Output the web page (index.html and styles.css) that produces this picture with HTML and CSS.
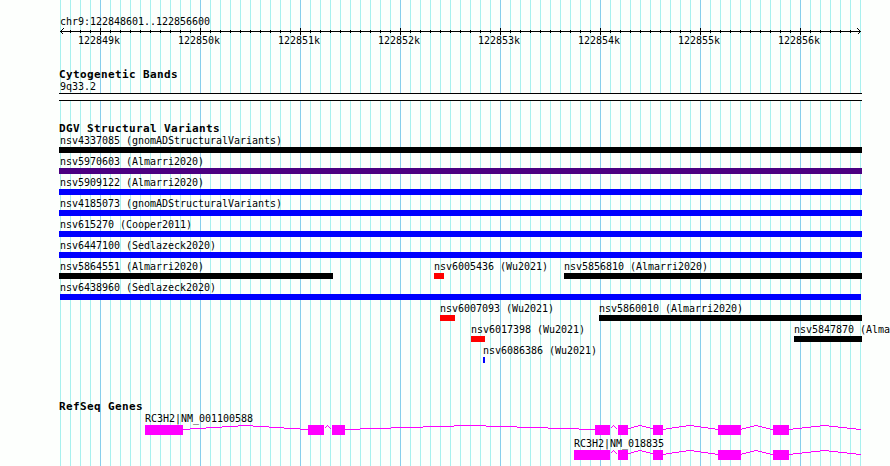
FILE: index.html
```
<!DOCTYPE html>
<html lang="en">
<head>
<meta charset="utf-8">
<title>chr9:122848601..122856600</title>
<link rel="stylesheet" href="styles.css">
</head>
<body>
<main class="browser">
  <header class="ruler">
    <div class="region">chr9:122848601..122856600</div>
    <svg class="axis" width="803" height="9" viewBox="0 0 803 9" shape-rendering="crispEdges">
      <defs>
        <pattern id="minor" x="1" width="10" height="9" patternUnits="userSpaceOnUse"><rect y="3" width="1" height="3"/></pattern>
        <pattern id="major" x="41" width="100" height="9" patternUnits="userSpaceOnUse"><rect y="1" width="1" height="7"/></pattern>
      </defs>
      <rect x="1" y="4" width="801" height="1"/>
      <rect x="10" width="786" height="9" fill="url(#minor)"/>
      <rect x="10" width="786" height="9" fill="url(#major)"/>
      <path class="arrow" d="M4.5 1.5L1.5 4.5L4.5 7.5M798.5 1.5L801.5 4.5L798.5 7.5"/>
    </svg>
    <div class="ticks"><span>122849k</span><span>122850k</span><span>122851k</span><span>122852k</span><span>122853k</span><span>122854k</span><span>122855k</span><span>122856k</span></div>
  </header>

  <section class="track cytoband">
    <h2>Cytogenetic Bands</h2>
    <div class="label">9q33.2</div>
    <div class="band"></div>
  </section>

  <section class="track variants">
    <h2>DGV Structural Variants</h2>
    <div class="lane"><div class="feature">nsv4337085 (gnomADStructuralVariants)<i class="bar black"></i></div></div>
    <div class="lane"><div class="feature">nsv5970603 (Almarri2020)<i class="bar purple"></i></div></div>
    <div class="lane"><div class="feature">nsv5909122 (Almarri2020)<i class="bar blue"></i></div></div>
    <div class="lane"><div class="feature">nsv4185073 (gnomADStructuralVariants)<i class="bar blue"></i></div></div>
    <div class="lane"><div class="feature">nsv615270 (Cooper2011)<i class="bar blue"></i></div></div>
    <div class="lane"><div class="feature">nsv6447100 (Sedlazeck2020)<i class="bar blue"></i></div></div>
    <div class="lane three">
      <div class="feature">nsv5864551 (Almarri2020)<i class="bar black" style="width:274px"></i></div>
      <div class="feature snug">nsv6005436 (Wu2021)<i class="bar red" style="width:10px"></i></div>
      <div class="feature snug">nsv5856810 (Almarri2020)<i class="bar black" style="width:298px"></i></div>
    </div>
    <div class="lane"><div class="feature inset">nsv6438960 (Sedlazeck2020)<i class="bar blue"></i></div></div>
    <div class="lane two">
      <div class="feature snug">nsv6007093 (Wu2021)<i class="bar red" style="width:15px"></i></div>
      <div class="feature snug">nsv5860010 (Almarri2020)<i class="bar black" style="width:263px"></i></div>
    </div>
    <div class="lane clipped">
      <div class="feature snug">nsv6017398 (Wu2021)<i class="bar red" style="width:14px"></i></div>
      <div class="feature snug">nsv5847870 (Alma<i class="bar black" style="width:68px"></i></div>
    </div>
    <div class="lane last"><div class="feature snug">nsv6086386 (Wu2021)<i class="bar blue" style="width:2px"></i></div></div>
  </section>

  <section class="track genes">
    <h2>RefSeq Genes</h2>
    <div class="gene long">
      <div class="label">RC3H2|NM_001100588</div>
      <svg width="716" height="10" viewBox="145 0 716 10" shape-rendering="crispEdges">
        <path class="intron" d="M183 4.5H190M190 3.5H206M206 2.5H222M222 1.5H238M238 .5H253M253 1.5H269M269 2.5H284M284 3.5H300M300 4.5H308M324.5 3.5L327.5 .5L331.5 4.5M345 4.5H360M360 3.5H391M391 2.5H423M423 1.5H454M454 .5H486M486 1.5H517M517 2.5H548M548 3.5H579M579 4.5H595"/>
        <path class="exon" d="M145 0h38v10h-38zM308 0h16v10h-16zM332 0h13v10h-13z"/>
        <g id="shared">
          <path class="intron" d="M610.5 3.5L613.5 .5L617.5 4.5M628 3.5H631M631 2.5H634M634 1.5H638M638 .5H642M642 1.5H646M646 2.5H650M650 3.5H653M663 4.5H666M666 3.5H672M672 2.5H679M679 1.5H686M686 .5H694M694 1.5H701M701 2.5H708M708 3.5H715M715 4.5H718M741 4.5H742M742 3.5H746M746 2.5H750M750 1.5H754M754 .5H758M758 1.5H762M762 2.5H766M766 3.5H770M770 4.5H773M789 4.5H793M793 3.5H802M802 2.5H811M811 1.5H820M820 .5H829M829 1.5H838M838 2.5H847M847 3.5H856M856 4.5H861"/>
          <path class="exon" d="M595 0h15v10h-15zM618 0h10v10h-10zM653 0h10v10h-10zM718 0h23v10h-23zM773 0h16v10h-16z"/>
        </g>
      </svg>
    </div>
    <div class="gene short">
      <div class="label">RC3H2|NM_018835</div>
      <svg width="287" height="10" viewBox="574 0 287 10" shape-rendering="crispEdges">
        <use href="#shared"/>
        <path class="exon" d="M574 0h36v10h-36z"/>
      </svg>
    </div>
  </section>
</main>
</body>
</html>
```
FILE: styles.css
```
* { box-sizing: border-box; }
body {
  margin: 0;
  background: #fdfffd;
  color: #000;
  font: 10px/12px "DejaVu Sans Mono", "Liberation Mono", monospace;
  letter-spacing: -0.02px;
}
.browser {
  width: 890px;
  height: 466px;
  padding: 15px 0 0 59px;
  overflow: hidden;
  background:
    repeating-linear-gradient(to right, #87ceeb 0 1px, transparent 1px 100px) 100px 0 / 761px 100% no-repeat,
    repeating-linear-gradient(to right, #a8f0ee 0 1px, transparent 1px 10px) 60px 0 / 801px 100% no-repeat;
}
svg { display: block; }
h2 {
  height: 12px;
  margin: 0;
  font: bold 11px/14px "DejaVu Sans Mono", "Liberation Mono", monospace;
  letter-spacing: 0.377px;
}
.region { height: 12px; padding-left: 1px; line-height: 14px; }
.arrow { fill: none; stroke: #000; }
.ticks {
  display: grid;
  grid-template-columns: repeat(8, 100px);
  height: 11px;
  margin-left: 19px;
  line-height: 9px;
}
.label { height: 12px; padding-left: 1px; line-height: 14px; }
.cytoband { padding-top: 21px; }
.band {
  width: 803px;
  height: 8px;
  margin-top: 1px;
  border: solid #000;
  border-width: 1px 0;
  background: #fdfffd;
}
.variants { padding-top: 21px; }
.lane { display: flex; width: 803px; height: 21px; white-space: nowrap; }
.feature { flex: 1; padding: 1px 0 0 1px; }
.snug { padding-left: 0; }
.bar { display: block; height: 6px; margin-left: -1px; }
.snug .bar { margin-left: 0; }
.inset .bar { margin: 0 1px 0 0; }
.black { background: #000; }
.purple { background: #4b0082; }
.blue { background: #00f; }
.red { background: #f00; }
.three { display: grid; grid-template-columns: 375px 130px 298px; }
.two { display: grid; grid-template-columns: 159px 263px; padding-left: 381px; }
.clipped { display: grid; grid-template-columns: 323px 68px; padding-left: 412px; }
.last { padding-left: 424px; }
.genes { padding-top: 35px; }
.gene { height: 25px; }
.gene .label { height: 13px; padding: 0; }
.gene:last-child { height: 23px; }
.long { padding-left: 86px; }
.short { padding-left: 515px; }
.intron { fill: none; stroke: #f0f; }
.exon { fill: #f0f; }
```
